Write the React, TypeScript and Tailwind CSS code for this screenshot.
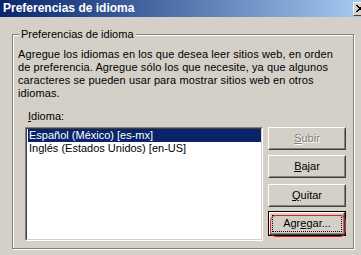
import React from "react";

const font = { fontFamily: "Tahoma, 'Liberation Sans', Arial, sans-serif" };

function Btn({
  children,
  disabled,
  isDefault,
}: {
  children: React.ReactNode;
  disabled?: boolean;
  isDefault?: boolean;
}) {
  const inner = (
    <div className="h-full w-full border border-t-white border-l-white border-b-[#404040] border-r-[#404040]">
      <div className="flex h-full w-full items-center justify-center border border-t-[#d4d0c8] border-l-[#d4d0c8] border-b-[#808080] border-r-[#808080] bg-[#d4d0c8]">
        <span
          className={
            disabled
              ? "text-[#808080] [text-shadow:1px_1px_0_#fff]"
              : "text-black"
          }
        >
          {children}
        </span>
      </div>
    </div>
  );
  if (isDefault) {
    return (
      <div className="relative h-[25px] w-[78px] border border-black">
        {inner}
        <div className="pointer-events-none absolute inset-[3px] border border-dotted border-black" />
      </div>
    );
  }
  return <div className="h-[23px] w-[78px]">{inner}</div>;
}

export default function App() {
  return (
    <div
      className="relative h-[255px] w-[361px] overflow-hidden bg-[#d4d0c8] text-[11px] leading-[13px] text-black"
      style={font}
    >
      {/* Title bar */}
      <div className="flex h-[17px] items-center bg-gradient-to-r from-[#0a246a] to-[#a6caf0] pl-[3px]">
        <span className="text-[12px] font-bold text-white">Preferencias de idioma</span>
        <div className="ml-auto mr-[-8px] flex h-[14px] w-[16px] items-center justify-start border border-t-white border-l-white border-b-[#404040] border-r-[#404040] bg-[#d4d0c8] pl-[2px]">
          <svg width="8" height="7" viewBox="0 0 8 7" shapeRendering="crispEdges">
            <path d="M0 0h2v1h-2zM1 1h2v1h-2zM2 2h2v1h-2zM3 3h2v1h-2zM2 4h2v1h-2zM1 5h2v1h-2zM0 6h2v1h-2zM6 0h2v1h-2zM5 1h2v1h-2zM4 2h2v1h-2zM5 5h2v1h-2zM6 6h2v1h-2zM4 4h2v1h-2z" fill="#000" />
          </svg>
        </div>
      </div>

      {/* Group box */}
      <div className="pl-[12px] pt-[17px]">
        <div className="relative h-[215px] w-[342px] border border-[#808080] shadow-[inset_1px_1px_0_#fff,1px_1px_0_#fff]">
          <span className="absolute left-[6px] top-[-7px] bg-[#d4d0c8] px-[2px]">
            Preferencias de idioma
          </span>
          <div className="pl-[5px] pt-[13px]">
            <p className="tracking-[0.1px]">
              Agregue los idiomas en los que desea leer sitios web, en orden
              <br />
              de preferencia. Agregue sólo los que necesite, ya que algunos
              <br />
              caracteres se pueden usar para mostrar sitios web en otros
              <br />
              idiomas.
            </p>
            <div className="pl-[10px] pt-[10px]">
              <span>
                <span className="underline">I</span>dioma:
              </span>
            </div>
            <div className="flex pl-[7px] pt-[4px]">
              <div className="h-[114px] w-[238px] border border-t-[#808080] border-l-[#808080] border-b-white border-r-white">
                <div className="h-full w-full border border-t-[#404040] border-l-[#404040] border-b-[#d4d0c8] border-r-[#d4d0c8] bg-white pl-[1px]">
                  <div className="h-[13px] bg-[#0a246a] pl-[1px] text-white">
                    Español (México) [es-mx]
                  </div>
                  <div className="h-[13px] pl-[1px]">
                    Inglés (Estados Unidos) [en-US]
                  </div>
                </div>
              </div>
              <div className="ml-[5px] flex flex-col">
                <Btn disabled>
                  <span className="underline">S</span>ubir
                </Btn>
                <div className="mt-[5px]">
                  <Btn>
                    <span className="underline">B</span>ajar
                  </Btn>
                </div>
                <div className="mt-[6px]">
                  <Btn>
                    <span className="underline">Q</span>uitar
                  </Btn>
                </div>
                <div className="relative mt-[4px]">
                  <Btn isDefault>
                    Agr<span className="underline">e</span>gar...
                  </Btn>
                  <div className="pointer-events-none absolute left-[2px] top-[4px] h-[22px] w-[76px] rounded-[6px] border-[1.5px] border-[#e02020]" />
                </div>
              </div>
            </div>
          </div>
        </div>
      </div>
    </div>
  );
}
